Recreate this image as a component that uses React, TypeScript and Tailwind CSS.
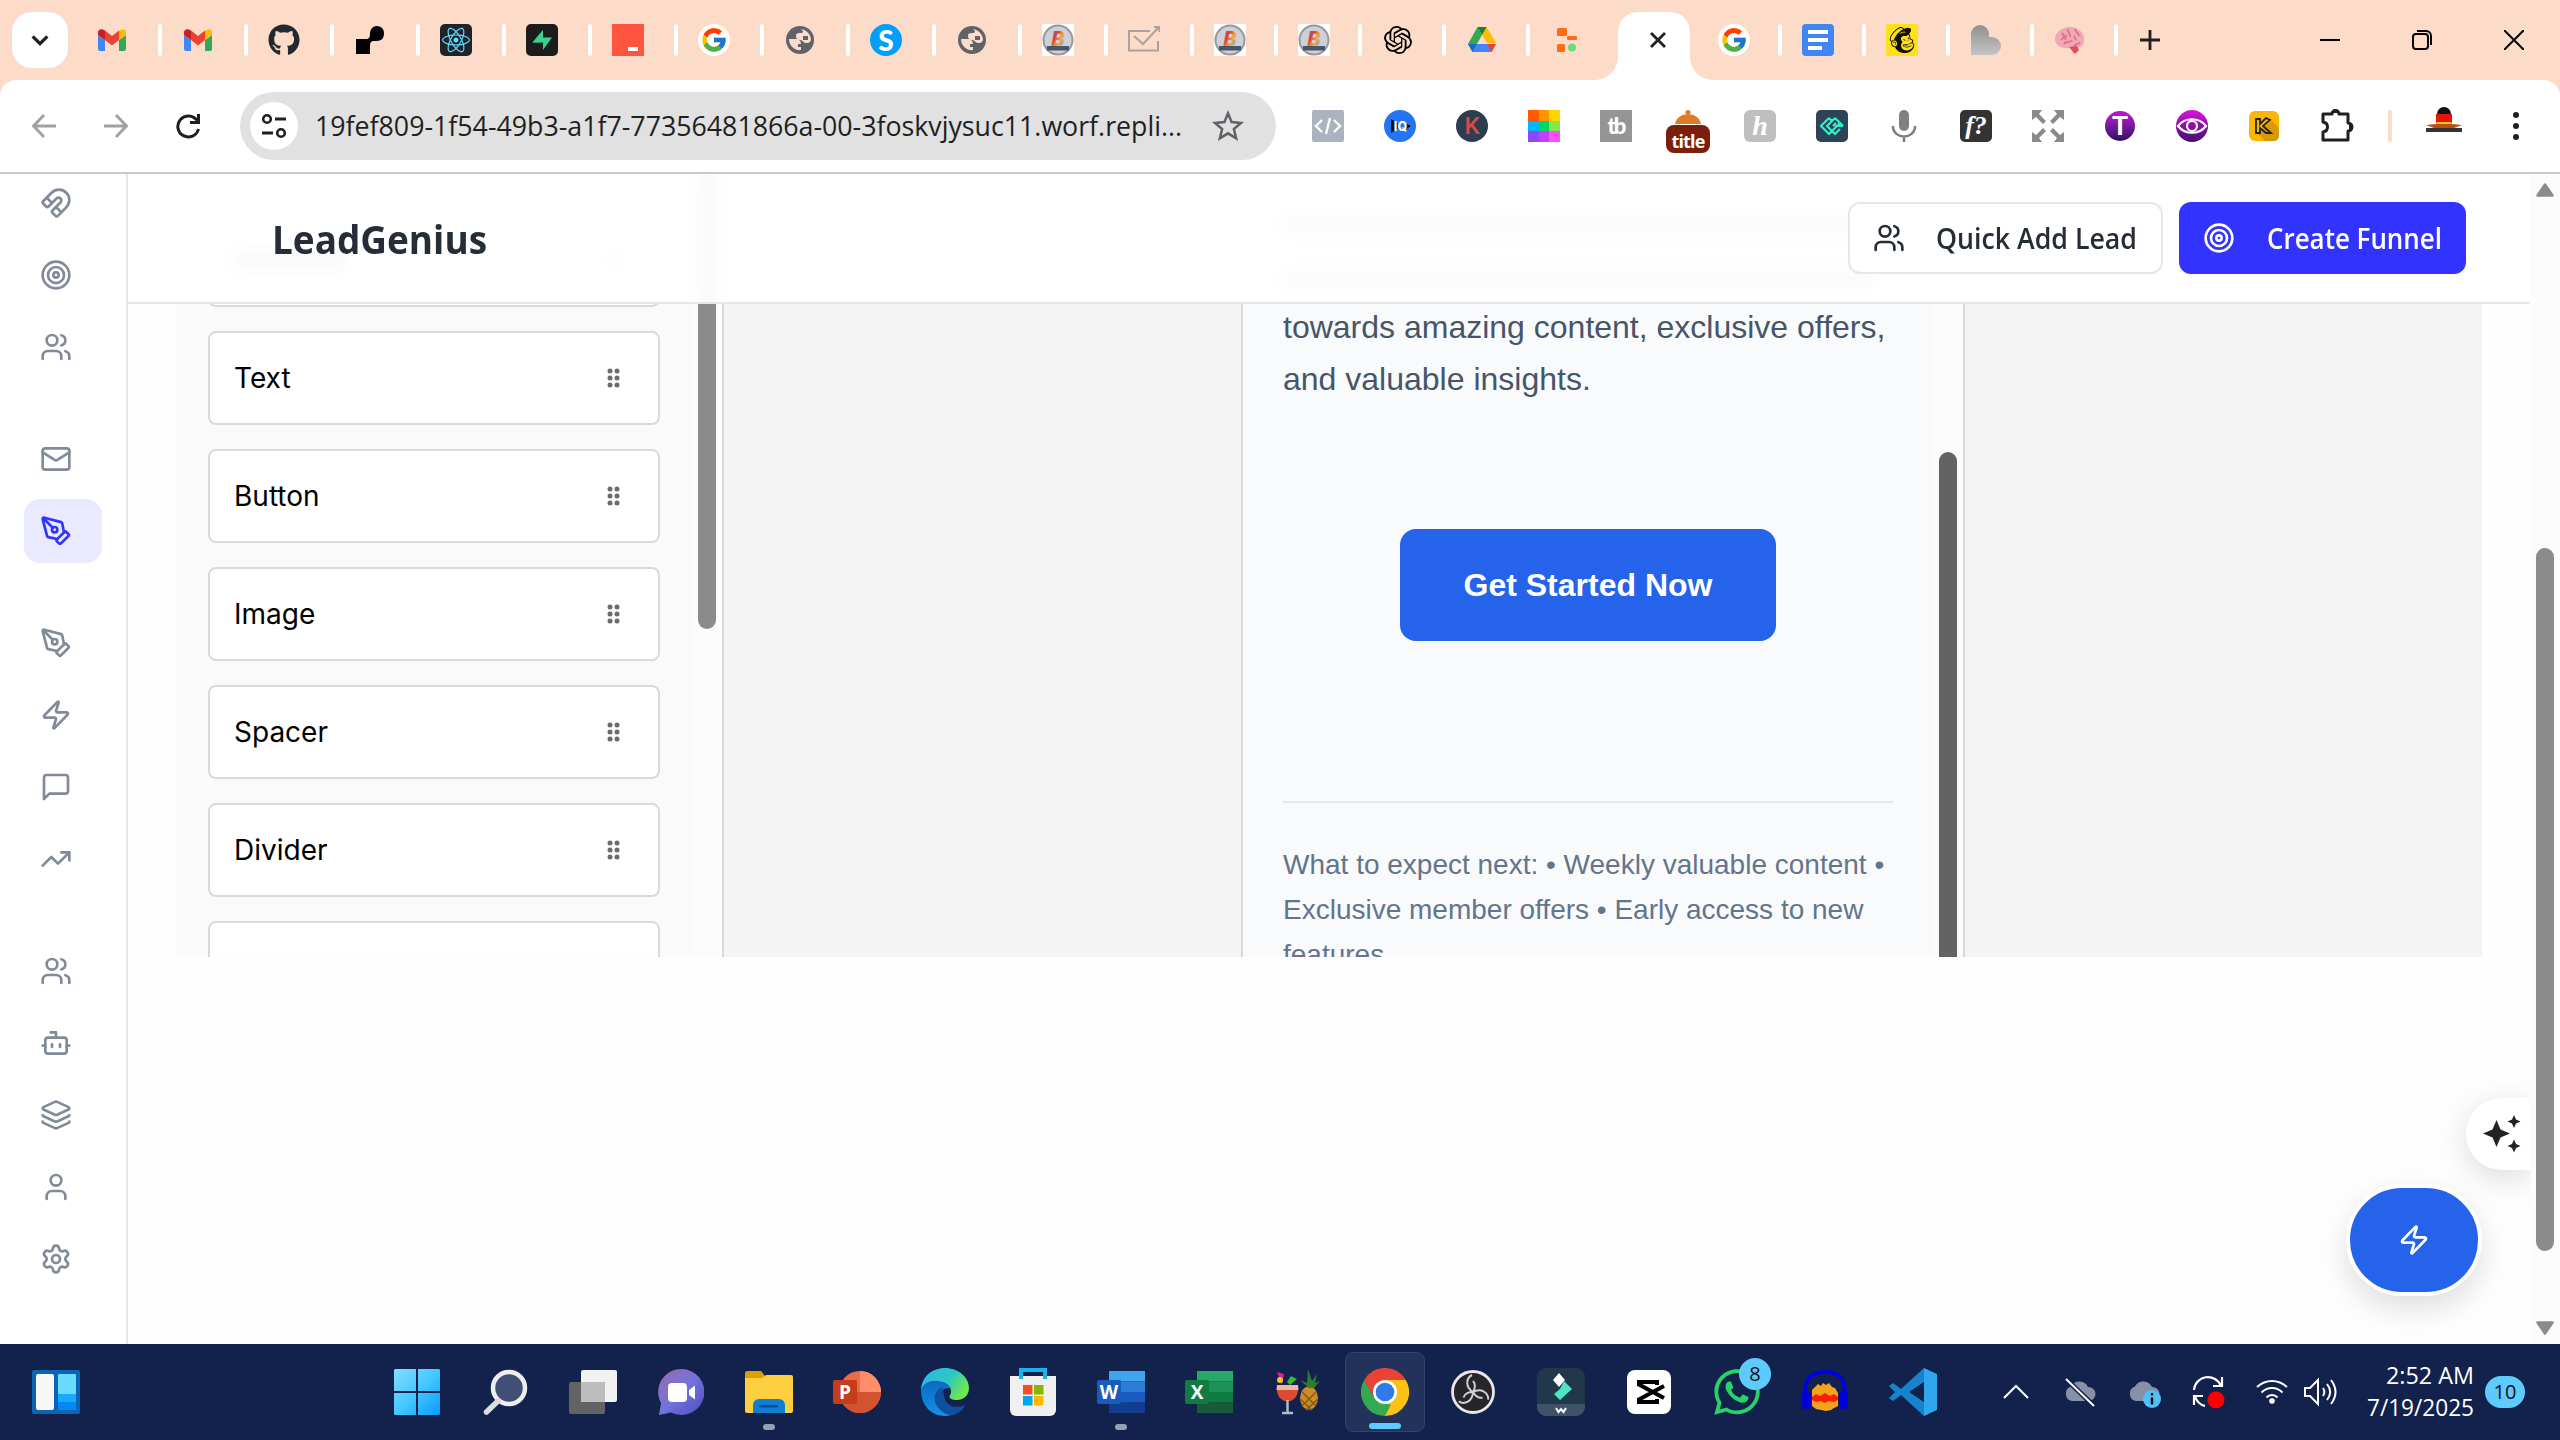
import React from "react";
import { Magnet, Target, Users, Mail, PenTool, Zap, TrendingUp, Bot, Layers, User, Settings } from "lucide-react";
import { FaGithub, FaReact, FaWhatsapp } from "react-icons/fa";
import { FcGoogle } from "react-icons/fc";
import { SiOpenai, SiMailchimp } from "react-icons/si";

type SvgProps = { children: React.ReactNode; size?: number; box?: number };
const Svg = ({ children, size = 32, box = 32 }: SvgProps) => (
  <svg width={size} height={size} viewBox={`0 0 ${box} ${box}`} fill="none" className="block shrink-0">
    {children}
  </svg>
);

/* ---------- tab favicons ---------- */
const Gmail = () => (
  <Svg>
    <path d="M2 11v14a2 2 0 0 0 2 2h5V16z" fill="#4285f4" />
    <path d="M23 27h5a2 2 0 0 0 2-2V11l-7 5z" fill="#34a853" />
    <path d="M23 6.500v9.500l7-5V8.500c0-3-3-4.200-5.200-2.600z" fill="#fbbc04" />
    <path d="M9 16V6.500l7 5.500 7-5.500V16l-7 5.500z" fill="#ea4335" />
    <path d="M2 8.500V11l7 5V6.500L7.200 5.700C5 4.500 2 5.600 2 8.500z" fill="#c5221f" />
  </Svg>
);
const Blob = () => (
  <Svg>
    <path d="M2 15h10c3 0 4-2 4-5 0-5 3-8 7-8s7 3 7 7c0 5-2 8-8 8h-2c-3 0-4 2-4 4v9H2z" fill="#000" />
  </Svg>
);
const ReactTab = () => (
  <div className="flex size-8 items-center justify-center rounded-[5px] bg-[#20232a]">
    <FaReact size={28} color="#61dafb" />
  </div>
);
const Supa = () => (
  <Svg>
    <rect width="32" height="32" rx="5" fill="#1c1c1c" />
    <path d="M17 6L6.500 18.500H15z" fill="#2fae75" />
    <path d="M17 26l9-12.500H17V6L6.500 18.500H17z" fill="#3ecf8e" />
  </Svg>
);
const RedTab = () => (
  <Svg>
    <rect width="32" height="32" fill="#ff5540" />
    <rect x="16" y="23" width="10" height="4" fill="#fff" />
  </Svg>
);
const GoogleTab = () => (
  <div className="flex size-8 items-center justify-center rounded-full bg-white">
    <FcGoogle size={28} />
  </div>
);
const Globe = () => (
  <Svg>
    <circle cx="16" cy="16" r="14" fill="#5f6368" />
    <path d="M5 15h7c3 0 5 2 5 5h-3v3h3v3c-6 1-12-4-12-11z" fill="#fcdbc9" />
    <path d="M17 5c6 1 10 6 10 11-1 3-3 3-5 3-3 0-3-3-6-3-3 0-4-2-4-4 0-3 2-3 5-3 2 0 3-2 0-4z" fill="#fcdbc9" />
    <path d="M19 12h5v4h-5z" fill="#5f6368" />
  </Svg>
);
const SkypeTab = () => (
  <div className="flex size-8 items-center justify-center rounded-full bg-[#009ffb] font-['Lato'] text-[28px] leading-none font-black text-white">S</div>
);
const BTab = () => (
  <Svg>
    <defs>
      <linearGradient id="btab" x1="0" y1="0" x2="1" y2="1">
        <stop stopColor="#2f80c9" />
        <stop offset=".35" stopColor="#e0402f" />
        <stop offset=".6" stopColor="#f7a93b" />
        <stop offset="1" stopColor="#3f8fd0" />
      </linearGradient>
    </defs>
    <rect width="32" height="32" fill="#fff" />
    <circle cx="16" cy="16" r="14.500" fill="#cdd0d8" stroke="#96989e" strokeWidth="2" />
    <text x="16" y="22" textAnchor="middle" fontFamily="'Roboto', sans-serif" fontStyle="italic" fontWeight="900" fontSize="21" fill="url(#btab)">B</text>
    <rect x="5" y="22" width="22" height="4.500" fill="#44566b" />
  </Svg>
);
const MailCheck = () => (
  <Svg>
    <path d="M22 7H1v19.500h29V17M6 12l9 8L31 3M26 3h5.500v5" stroke="#a8a39e" strokeWidth="2" />
  </Svg>
);
const Drive = () => (
  <Svg>
    <path d="M11.500 3h9L30 19h-9z" fill="#fbbc04" />
    <path d="M11.500 3l4.500 8L6.500 28 2 20z" fill="#34a853" />
    <path d="M11.500 3h9L16 11z" fill="#188038" />
    <path d="M11 20h19l-4.500 8h-19z" fill="#4285f4" />
    <path d="M2 20h9l-4.500 8z" fill="#1967d2" />
    <path d="M21 20h9l-4.500 8z" fill="#ea4335" />
  </Svg>
);
const Workflow = () => (
  <Svg>
    <rect x="7" y="4" width="10" height="8" rx="1.500" fill="#ff6a13" />
    <rect x="17" y="12" width="10" height="4" rx="1" fill="#ff6a13" />
    <rect x="7" y="20" width="8" height="8" rx="1.500" fill="#ff6a13" />
    <circle cx="22" cy="23.500" r="4" fill="#6bdc7c" />
  </Svg>
);
const Docs = () => (
  <Svg>
    <rect width="32" height="32" rx="4" fill="#4285f4" />
    <path d="M6 8h20M6 16h20M6 24h14" stroke="#fff" strokeWidth="4" />
  </Svg>
);
const Mailchimp = () => (
  <div className="flex size-8 items-center justify-center rounded-[2px] bg-[#ffe01b]">
    <SiMailchimp size={26} color="#111" />
  </div>
);
const GreyShape = () => (
  <Svg>
    <defs>
      <linearGradient id="gs" x1="0" y1="0" x2="0" y2="1">
        <stop offset="0" stopColor="#909090" />
        <stop offset="1" stopColor="#c4c4c4" />
      </linearGradient>
    </defs>
    <path d="M1 10a9 9 0 0 1 18 0v3h3a9 9 0 0 1 0 18H1z" fill="url(#gs)" />
  </Svg>
);
const Brain = () => (
  <Svg>
    <path d="M16 3c8 0 15 6 14 14-.5 5-3 6-6 6l-1 4-4 2-3-5c-8 1-15-2-15-9C1 8 8 3 16 3z" fill="#f3a6b3" />
    <path d="M8 9c3 3 2 5-1 7m7-11c-1 4 3 4 2 8m5-8c0 4 4 3 4 7M10 20c2-4 6 0 8-4m2 6c2-3 5-1 6-4M12 11l-1 5m9-4l2 4" stroke="#d9728a" strokeWidth="1.800" />
    <path d="M15 23l8-1 2 4-4 4z" fill="#dd4f63" />
  </Svg>
);

const wideTabs = [Gmail, Gmail, () => <FaGithub size={32} color="#24292f" />, Blob, ReactTab, Supa, RedTab, GoogleTab, Globe, SkypeTab, Globe, BTab, MailCheck];
const narrowTabs = [BTab, BTab, () => <SiOpenai size={28} color="#000" />, Drive];
const rightTabs = [GoogleTab, Docs, Mailchimp, GreyShape, Brain];

const Sep = () => <div className="h-8 w-1 rounded-sm bg-white" />;

const TabCell = ({ icon: Icon, wide, last }: { icon: React.FC; wide?: boolean; last?: boolean }) => (
  <div className={`flex shrink-0 items-center justify-between pl-5 ${wide ? "w-[86px]" : "w-[84px]"}`}>
    <div className="flex size-8 items-center justify-center">
      <Icon />
    </div>
    {!last && <Sep />}
  </div>
);

const TabStrip = () => (
  <div className="flex h-20 shrink-0 bg-[#fcdbc9]">
    <div className="flex w-[76px] shrink-0 items-center pl-3">
      <div className="flex size-14 items-center justify-center rounded-[20px] bg-white">
        <Svg size={22} box={24}>
          <path d="M4 8l8 8 8-8" stroke="#1f1f1f" strokeWidth="3.500" />
        </Svg>
      </div>
    </div>
    {wideTabs.map((t, i) => (
      <TabCell key={i} icon={t} wide />
    ))}
    {narrowTabs.map((t, i) => (
      <TabCell key={i} icon={t} />
    ))}
    <TabCell icon={Workflow} last />
    <div className="flex w-[84px] shrink-0 items-end justify-center pr-1">
      <svg width="24" height="24" viewBox="0 0 24 24" className="-ml-5 shrink-0">
        <path d="M24 0v24H0C14 24 24 14 24 0z" fill="#fff" />
      </svg>
      <div className="flex h-[68px] w-[72px] shrink-0 items-center justify-center rounded-t-[20px] bg-white pb-3 pl-2">
        <Svg size={18} box={18}>
          <path d="M2 2l14 14M16 2L2 16" stroke="#1f1f1f" strokeWidth="2.800" />
        </Svg>
      </div>
      <svg width="24" height="24" viewBox="0 0 24 24" className="-mr-5 shrink-0">
        <path d="M0 0v24h24C10 24 0 14 0 0z" fill="#fff" />
      </svg>
    </div>
    {rightTabs.map((t, i) => (
      <TabCell key={i} icon={t} />
    ))}
    <div className="flex w-16 items-center justify-center">
      <Svg size={22} box={22}>
        <path d="M11 1v20M1 11h20" stroke="#1f1f1f" strokeWidth="2.800" />
      </Svg>
    </div>
    <div className="ml-auto flex items-center">
      <div className="flex w-[92px] justify-center">
        <Svg size={20} box={20}><path d="M0 10h20" stroke="#000" strokeWidth="2" /></Svg>
      </div>
      <div className="flex w-[92px] justify-center">
        <Svg size={20} box={20}>
          <rect x="1" y="4" width="15" height="15" rx="3" stroke="#000" strokeWidth="2" />
          <path d="M5 1h9a5 5 0 0 1 5 5v9" stroke="#000" strokeWidth="2" />
        </Svg>
      </div>
      <div className="flex w-[92px] justify-center">
        <Svg size={20} box={20}><path d="M0 0l20 20M20 0L0 20" stroke="#000" strokeWidth="2" /></Svg>
      </div>
    </div>
  </div>
);

/* ---------- extension icons ---------- */
const extensions: React.FC[] = [
  () => (
    <Svg>
      <rect width="32" height="32" rx="2" fill="#adb3be" />
      <path d="M10 10l-6 6 6 6M22 10l6 6-6 6M18 8l-4 16" stroke="#fff" strokeWidth="2.400" />
    </Svg>
  ),
  () => (
    <Svg>
      <circle cx="16" cy="16" r="16" fill="#2474f5" />
      <path d="M7 9l8 5v4l-8 5z" fill="#111" />
      <path d="M21 13l6 3-6 4z" fill="#111" />
      <text x="16.500" y="20.500" textAnchor="middle" fontFamily="'Inter', sans-serif" fontWeight="800" fontSize="12.500" fill="#fff">IQ</text>
    </Svg>
  ),
  () => <div className="flex size-8 items-center justify-center rounded-full bg-[#2c3e4f] font-['Roboto'] text-[24px] leading-none font-medium text-[#d9484a]">K</div>,
  () => (
    <div className="grid size-8 grid-cols-3 overflow-hidden">
      <i className="bg-[#ff5a00]" /><i className="bg-[#ff9400]" /><i className="bg-[#ffd400]" />
      <i className="bg-[#00b7ff]" /><i className="bg-[#00d565]" /><i className="bg-[#84e84a]" />
      <i className="bg-[#8b49ff]" /><i className="bg-[#c340ff]" /><i className="bg-[#ff4dff]" />
    </div>
  ),
  () => <div className="flex size-8 items-center justify-center bg-[#959595] font-['Lato'] text-[22px] leading-none font-black tracking-[-2px] text-white">tb</div>,
  () => (
    <div className="mt-2.5 flex flex-col items-center">
      <svg width="26" height="14" viewBox="0 0 26 14">
        <circle cx="13" cy="2.500" r="2.500" fill="#e07b26" />
        <path d="M0 14C2 1 24 1 26 14z" fill="#e07b26" />
      </svg>
      <div className="mt-px flex h-7 w-11 items-center justify-center rounded-lg bg-[#7c1e0c] pt-1 font-['Open_Sans'] text-[18px] leading-none font-bold tracking-[-0.8px] text-white">title</div>
    </div>
  ),
  () => <div className="flex size-8 items-center justify-center rounded-md bg-[#bfbfbf] font-['Liberation_Serif'] text-[28px] leading-none font-bold text-white italic">h</div>,
  () => (
    <Svg>
      <rect width="32" height="32" rx="5" fill="#2d435a" />
      <path d="M13 8l-8 8 8 8 3-3M13 8l3 3M19 8l-8 8 5 5 8-8M19 8l8 8M17 16l3-3M27 16h-8M24 19l-5 5-3-3" stroke="#31f0c4" strokeWidth="2.200" />
    </Svg>
  ),
  () => (
    <Svg>
      <rect x="11" y="0" width="10" height="21" rx="5" fill="#808080" />
      <path d="M5 16c0 14 22 14 22 0M16 26v6" stroke="#808080" strokeWidth="2.600" />
    </Svg>
  ),
  () => <div className="flex size-8 items-center justify-center rounded-[5px] bg-[#333] font-['Liberation_Serif'] text-[26px] leading-none font-bold text-white italic">f?</div>,
  () => (
    <Svg>
      <path d="M0 0h10L7 4l7 7-3 3-7-7-4 3zM32 0v10l-4-3-7 7-3-3 7-7-3-4zM0 32V22l4 3 7-7 3 3-7 7 3 4zM32 32H22l3-4-7-7 3-3 7 7 4-3z" fill="#8a8a8a" />
    </Svg>
  ),
  () => <div className="flex size-[30px] items-center justify-center rounded-full bg-linear-to-b from-[#c511d4] to-[#2d0f66] font-['Roboto'] text-[26px] leading-none font-bold text-white">T</div>,
  () => (
    <Svg>
      <defs>
        <linearGradient id="eye" x1="0" y1="0" x2="0" y2="1"><stop stopColor="#dd11dd" /><stop offset="1" stopColor="#3a1070" /></linearGradient>
      </defs>
      <circle cx="16" cy="16" r="16" fill="url(#eye)" />
      <path d="M2 16c7-9 21-9 28 0-7 9-21 9-28 0z" stroke="#fff" strokeWidth="2.200" />
      <circle cx="16" cy="16" r="5" stroke="#fff" strokeWidth="2.200" />
    </Svg>
  ),
  () => (
    <Svg>
      <rect x="1" y="1" width="30" height="30" rx="6" fill="#fbb604" />
      <path d="M9 23l15-12 7 7v8a5 5 0 0 1-5 5H17z" fill="#d79a06" />
      <path d="M8 9v14h4v-5l6 5h5l-8-7 7-6-4-2-6 6V9z" stroke="#222" strokeWidth="1.800" />
    </Svg>
  ),
  () => (
    <Svg size={36} box={36}>
      <path d="M5 6h9a3.500 3.500 0 0 1 7 0h9v9a4 4 0 0 1 0 8v9H5v-8c6-1 6-9 0-10z" stroke="#1f1f1f" strokeWidth="3" strokeLinejoin="round" />
      <path d="M14 5a3.500 3.500 0 0 1 7 0zM31 15a4 4 0 0 1 0 8z" fill="#1f1f1f" />
    </Svg>
  ),
];

const Toolbar = () => (
  <div className="shrink-0 bg-[#fcdbc9]">
    <div className="flex h-[94px] items-center rounded-t-2xl border-b-2 border-[#c9c9c9] bg-white">
      <div className="ml-2 flex items-center">
        <div className="flex w-[72px] justify-center">
          <Svg size={24} box={24}><path d="M24 12H2M12 1L1.500 12 12 23" stroke="#a0a0a0" strokeWidth="2.800" /></Svg>
        </div>
        <div className="flex w-[72px] justify-center">
          <Svg size={24} box={24}><path d="M0 12h22M12 1l10.500 11L12 23" stroke="#a0a0a0" strokeWidth="2.800" /></Svg>
        </div>
        <div className="flex w-[72px] justify-center">
          <Svg size={26} box={26}><path d="M22 7.500A10.500 10.500 0 1 0 23.500 16M23.500 1v8.500H15" stroke="#1f1f1f" strokeWidth="3" /></Svg>
        </div>
      </div>
      <div className="ml-4 flex h-[68px] w-[1036px] shrink-0 items-center rounded-full bg-[#e1e1e1] pr-8 pl-2.5">
        <div className="flex size-12 shrink-0 items-center justify-center rounded-full bg-white">
          <Svg size={26} box={26}>
            <circle cx="6" cy="6" r="3.800" stroke="#1f1f1f" strokeWidth="2.600" />
            <circle cx="20" cy="20" r="3.800" stroke="#1f1f1f" strokeWidth="2.600" />
            <path d="M14 6h11M1 20h11" stroke="#1f1f1f" strokeWidth="2.800" />
          </Svg>
        </div>
        <svg width="890" height="44" viewBox="0 0 890 44" className="ml-4 overflow-visible">
          <text x="1" y="32" textLength="867" lengthAdjust="spacingAndGlyphs" fontFamily="'Open Sans', sans-serif" fontSize="28" fill="#1f1f1f">
            19fef809-1f54-49b3-a1f7-77356481866a-00-3foskvjysuc11.worf.repli...
          </text>
        </svg>
        <div className="ml-2">
          <Svg size={32} box={24}>
            <path d="M12 2.500l2.700 6.600 7.100.6-5.400 4.600 1.700 7L12 17.500l-6.100 3.800 1.700-7-5.400-4.600 7.100-.6z" stroke="#5f6368" strokeWidth="1.900" />
          </Svg>
        </div>
      </div>
      <div className="ml-4 flex items-center">
        {extensions.map((E, i) => (
          <div key={i} className="flex w-[72px] justify-center"><E /></div>
        ))}
      </div>
      <div className="ml-4 h-8 w-1 rounded-sm bg-[#fcdbc9]" />
      <div className="ml-[34px] flex w-9 flex-col items-center">
        <svg width="38" height="26" viewBox="0 0 38 26" className="-mt-3">
          <path d="M12 7a7 7 0 0 1 14 0z" fill="#111" />
          <path d="M11 7h16v9H11z" fill="#e8120c" />
          <path d="M12 15h14l3 4H9z" fill="#ffc800" />
          <path d="M1 18l10-1h16l10 1-8 3H9z" fill="#b5501a" />
          <rect x="1" y="21" width="36" height="4" fill="#333" />
        </svg>
      </div>
      <div className="ml-[51px] flex flex-col gap-[5px]">
        <i className="size-1.5 rounded-full bg-[#1f1f1f]" />
        <i className="size-1.5 rounded-full bg-[#1f1f1f]" />
        <i className="size-1.5 rounded-full bg-[#1f1f1f]" />
      </div>
    </div>
  </div>
);

/* ---------- application ---------- */
const MessageBox = ({ size = 32 }: { size?: number }) => (
  <svg width={size} height={size} viewBox="0 0 24 24" fill="none" stroke="currentColor" strokeWidth="2" strokeLinecap="round" strokeLinejoin="round">
    <path d="M21 15a2 2 0 0 1-2 2H7l-4 4V5a2 2 0 0 1 2-2h14a2 2 0 0 1 2 2z" />
  </svg>
);

const navGroups = [
  [Magnet, Target, Users],
  [Mail, PenTool],
  [PenTool, Zap, MessageBox, TrendingUp],
  [Users, Bot, Layers, User, Settings],
];

const Sidebar = () => (
  <nav className="w-32 shrink-0 border-r-2 border-[#e2e8f0] bg-white pl-6">
    <div className="-mt-[3px] flex flex-col gap-12">
      {navGroups.map((group, g) => (
        <div key={g} className="flex flex-col gap-2">
          {group.map((Icon, i) => {
            const active = g === 1 && i === 1;
            return (
              <div key={i} className={`flex h-16 w-[78px] items-center rounded-2xl pl-4 ${active ? "bg-[#e9e9ff] text-[#3333ff]" : "text-[#828a99]"}`}>
                <Icon size={32} />
              </div>
            );
          })}
        </div>
      ))}
    </div>
  </nav>
);

const Grip = () => (
  <svg width="13" height="20" viewBox="0 0 13 20" fill="#6b6b6b">
    {[3, 10, 17].map((y) => (
      <g key={y}>
        <circle cx="3" cy={y} r="2.500" />
        <circle cx="10" cy={y} r="2.500" />
      </g>
    ))}
  </svg>
);

const BlockPalette = () => (
  <div className="flex w-[548px] shrink-0 border-r-2 border-[#d9d9d9] bg-[#fafafa]">
    <div className="flex w-[516px] shrink-0 flex-col gap-6 pt-[39px] pl-8">
      {["", "Text", "Button", "Image", "Spacer", "Divider", ""].map((label, i) => (
        <div key={i} className="flex h-[94px] w-[452px] shrink-0 items-center justify-between rounded-lg border-2 border-[#d9d9d9] bg-white pr-[38px] pl-6 font-['Inter'] text-[28px] text-black">
          {label ? <span>{label}</span> : <i className="h-4 w-[112px] bg-black/60" />}
          <Grip />
        </div>
      ))}
    </div>
    <div className="flex h-full w-[30px] justify-center bg-[#fcfcfc]">
      <div className="h-[455px] w-[18px] rounded-full bg-[#8b8b8b]" />
    </div>
  </div>
);

const Preview = () => (
  <div className="flex w-[724px] shrink-0 border-x-2 border-[#d9d9d9] bg-[#f8fafc] font-['Liberation_Sans']">
    <div className="w-[690px] px-10">
      <div className="h-[128px] pt-11">
        <div className="h-4 w-[600px] bg-[#475569]/60" />
        <div className="mt-9 h-4 w-[590px] bg-[#475569]/60" />
      </div>
      <p className="text-[32px] leading-[51.5px] whitespace-nowrap text-[#475569]">
        towards amazing content, exclusive offers,
        <br />
        and valuable insights.
      </p>
      <div className="mx-auto mt-[124px] flex h-28 w-[376px] items-center justify-center rounded-2xl bg-[#2563eb] text-[32px] font-bold text-white">
        Get Started Now
      </div>
      <div className="mt-40 h-0.5 bg-[#e2e8f0]" />
      <p className="mt-10 text-[28px] leading-[44.800px] whitespace-nowrap text-[#64748b]">
        What to expect next: • Weekly valuable content •
        <br />
        Exclusive member offers • Early access to new
        <br />
        features
      </p>
    </div>
    <div className="flex w-[30px] justify-center bg-[#fcfcfc]">
      <div className="mt-[278px] w-[18px] rounded-t-full bg-[#636363]" />
    </div>
  </div>
);

const AppHeader = () => (
  <header className="absolute inset-x-0 top-0 flex h-[130px] items-center border-b-2 border-[#e2e8f0] bg-white/95 pr-16 pl-[144px] backdrop-blur-[8px]">
    <svg width="220" height="60" viewBox="0 0 220 60" className="mr-auto overflow-visible">
      <text x="0" y="46" textLength="215" lengthAdjust="spacingAndGlyphs" fontFamily="'Open Sans', sans-serif" fontWeight="700" fontSize="39.500" fill="#272d38">
        LeadGenius
      </text>
    </svg>
    <div className="flex h-[72px] w-[315px] shrink-0 items-center rounded-xl border-2 border-[#e2e8f0] bg-white pl-[23px] text-[#272d38]">
      <Users size={32} className="shrink-0" />
      <svg width="202" height="40" viewBox="0 0 202 40" className="ml-[31px] shrink-0 overflow-visible">
        <text x="0" y="30.500" textLength="201" lengthAdjust="spacingAndGlyphs" fontFamily="'Open Sans', sans-serif" fontWeight="600" fontSize="28" fill="#272d38">
          Quick Add Lead
        </text>
      </svg>
    </div>
    <div className="ml-4 flex h-[72px] w-[287px] shrink-0 items-center rounded-xl bg-[#3333ff] pl-6 text-white">
      <Target size={32} className="shrink-0" />
      <svg width="178" height="40" viewBox="0 0 178 40" className="ml-8 shrink-0 overflow-visible">
        <text x="0" y="30.500" textLength="175" lengthAdjust="spacingAndGlyphs" fontFamily="'Open Sans', sans-serif" fontWeight="600" fontSize="28" fill="#fff">
          Create Funnel
        </text>
      </svg>
    </div>
  </header>
);

const Workspace = () => (
  <main className="relative w-[2402px] shrink-0 overflow-hidden bg-[#fefefe]">
    <div className="mx-12 flex h-[783px] w-[2306px] overflow-hidden bg-[#f4f4f4]">
      <BlockPalette />
      <div className="flex flex-1 pl-[517px]">
        <Preview />
      </div>
    </div>
    <AppHeader />
    <div className="absolute top-[924px] right-0 flex h-[72px] w-16 items-center rounded-l-full bg-white pl-4 shadow-[0_8px_32px_rgba(0,0,0,0.14)]">
      <svg width="40" height="40" viewBox="0 0 40 40" fill="#222">
        <path d="M14.500 6l4 9.500 9.500 4-9.500 4-4 9.500-4-9.500-9.500-4 9.500-4zM32 1l2 4.500 4.500 2L34 9.500 32 14l-2-4.500-4.500-2 4.500-2zM32 25.500l2 4.500 4.500 2-4.500 2-2 4.500-2-4.500-4.500-2 4.500-2z" />
      </svg>
    </div>
    <div className="absolute top-[1010px] right-12 flex h-28 w-[136px] items-center justify-center rounded-[56px] border-4 border-white bg-[#2563eb] text-white shadow-[0_12px_30px_rgba(0,0,0,0.13)]">
      <Zap size={32} />
    </div>
  </main>
);

const PageScrollbar = () => (
  <div className="flex w-[30px] shrink-0 flex-col items-center bg-[#fcfcfc] pt-[9px] pb-[9px]">
    <svg width="18" height="14" viewBox="0 0 18 14"><path d="M9 1.500L16.500 12.500h-15z" fill="#8b8b8b" stroke="#8b8b8b" strokeWidth="2.500" strokeLinejoin="round" /></svg>
    <div className="mt-[351px] h-[703px] w-[18px] rounded-full bg-[#8b8b8b]" />
    <svg width="18" height="14" viewBox="0 0 18 14" className="mt-auto"><path d="M9 12.500L1.500 1.500h15z" fill="#8b8b8b" stroke="#8b8b8b" strokeWidth="2.500" strokeLinejoin="round" /></svg>
  </div>
);

/* ---------- taskbar ---------- */
const OfficeTile = ({ letter, tones, badge, round }: { letter: string; tones: string[]; badge: string; round?: boolean }) => (
  <svg width="48" height="48" viewBox="0 0 48 48">
    {round ? (
      <>
        <circle cx="27" cy="24" r="21" fill={tones[0]} />
        <path d="M27 3a21 21 0 0 1 21 21H27z" fill={tones[1]} />
        <path d="M6 24h42a21 21 0 0 1-42 0z" fill={tones[2]} />
      </>
    ) : (
      tones.map((c, i) => <rect key={c} x="12" y={3 + i * 10.500} width="36" height="10.500" fill={c} />)
    )}
    <rect x="0" y="12" width="24" height="24" rx="2" fill={badge} />
    <text x="12" y="31" textAnchor="middle" fontFamily="'Open Sans', sans-serif" fontWeight="700" fontSize="19" fill="#fff">{letter}</text>
  </svg>
);

const Start = () => (
  <Svg size={46} box={46}>
    <defs>
      <linearGradient id="win" gradientUnits="userSpaceOnUse" x1="0" y1="0" x2="46" y2="46"><stop stopColor="#86dcff" /><stop offset=".5" stopColor="#45c8ff" /><stop offset="1" stopColor="#0a98ff" /></linearGradient>
    </defs>
    <path d="M1 0h21v22H0V1zM24 0h21l1 1v21H24zM0 24h22v22H1l-1-1zM24 24h22v21l-1 1H24z" fill="url(#win)" />
  </Svg>
);
const Search = () => (
  <Svg size={46} box={46}>
    <circle cx="27" cy="19" r="16" fill="#414e75" stroke="#eee" strokeWidth="4.500" />
    <path d="M16 32L4.500 43" stroke="#ddd" strokeWidth="5.500" strokeLinecap="round" />
  </Svg>
);
const TaskView = () => (
  <Svg size={48} box={48}>
    <rect x="0" y="14" width="36" height="32" rx="2" fill="#636363" />
    <rect x="12" y="2" width="36" height="32" rx="2" fill="#f2f2f2" />
    <rect x="12" y="14" width="24" height="20" fill="#bdbdbd" />
  </Svg>
);
const Chat = () => (
  <Svg size={46} box={46}>
    <defs><linearGradient id="chat" x1="0" y1="0" x2="1" y2="1"><stop stopColor="#9c6ba8" /><stop offset=".5" stopColor="#7273dc" /><stop offset="1" stopColor="#5049c0" /></linearGradient></defs>
    <path d="M23 0a23 23 0 1 1-10 43.500L1 46l2-12A23 23 0 0 1 23 0z" fill="url(#chat)" />
    <rect x="10" y="14" width="19" height="19" rx="4" fill="#fff" />
    <path d="M31 21l6-4.500v14L31 26z" fill="#fff" />
  </Svg>
);
const Explorer = () => (
  <Svg size={48} box={48}>
    <path d="M0 5a2 2 0 0 1 2-2h14l4 5v6H0z" fill="#dd9f00" />
    <path d="M0 10h17l4-3h25a2 2 0 0 1 2 2v34a2 2 0 0 1-2 2H2a2 2 0 0 1-2-2z" fill="#ffcf42" />
    <path d="M8 45V37a6 6 0 0 1 6-6h20a6 6 0 0 1 6 6v8z" fill="#0f7fd6" />
    <rect x="14" y="37" width="19" height="2.500" fill="#0a4f94" />
  </Svg>
);
const Edge = () => (
  <Svg size={48} box={48}>
    <defs>
      <linearGradient id="e1" x1="0" y1="0" x2="1" y2=".5"><stop stopColor="#2fb4f0" /><stop offset=".6" stopColor="#2cc8c2" /><stop offset="1" stopColor="#6be84b" /></linearGradient>
      <linearGradient id="e2" x1="0" y1="0" x2="0" y2="1"><stop stopColor="#0a6bc0" /><stop offset="1" stopColor="#1590e6" /></linearGradient>
    </defs>
    <path d="M0 23C0 9 11 0 24 0s24 9 24 20c0 8-6 12-12 12-5 0-9-2-7-5 3-4 0-11-8-13C10 12 2 16 0 23z" fill="url(#e1)" />
    <path d="M0 22c2-7 10-10 17-9 7 1 11 4 12 7-7-1-12 5-10 13 2 9 10 14 17 12-4 2-8 3-12 3C10 48 0 37 0 22z" fill="url(#e2)" />
    <path d="M21 19c-7 4-10 11-5 19 6 9 16 11 20 7 4-1 7-5 8-8-8 4-20 2-21-10z" fill="#10509f" />
  </Svg>
);
const Store = () => (
  <Svg size={48} box={48}>
    <path d="M1 8h46v34a6 6 0 0 1-6 6H7a6 6 0 0 1-6-6z" fill="#f0f0f0" />
    <path d="M12 11V2h24v9" stroke="#1ab2ee" strokeWidth="4" />
    <rect x="14" y="17" width="9.500" height="9.500" fill="#f25022" />
    <rect x="25" y="17" width="9.500" height="9.500" fill="#7fba00" />
    <rect x="14" y="28" width="9.500" height="9.500" fill="#00a4ef" />
    <rect x="25" y="28" width="9.500" height="9.500" fill="#ffb900" />
  </Svg>
);
const Cocktail = () => (
  <Svg size={48} box={48}>
    <ellipse cx="36" cy="30" rx="9" ry="11.500" fill="#c98c28" />
    <path d="M29 24l14 14M27 31l12 11M43 24L29 38M45 31L33 42" stroke="#8a5813" strokeWidth="1.500" />
    <path d="M36 20l-9-8 7 3 1-14 4 12 5-7-2 9 5-2-6 7z" fill="#2f7d28" />
    <path d="M4 18h21c1 8-3 14-8 15h-5C7 32 3 26 4 18z" fill="#e04b2f" />
    <path d="M4 17h21l.5 5H3.500z" fill="#e9b9a5" />
    <path d="M14.500 32v12M9 45h11" stroke="#aebccb" strokeWidth="2.500" />
    <path d="M9 17L4 4l7 2z" fill="#e0208f" /><path d="M14 14l4-6 6 3-7 6z" fill="#37b837" /><circle cx="7" cy="12" r="3" fill="#f0c22e" />
  </Svg>
);
const Chrome = () => (
  <Svg size={48} box={48}>
    <path d="M24 24V12h20.800A24 24 0 0 1 24 48z" fill="#fbc116" />
    <path d="M24 48l10.400-18L24 24l-10 6z" fill="#fbc116" />
    <path d="M3.200 12L13.600 30 24 36l6 .5L24 48A24 24 0 0 1 3.200 12z" fill="#34a853" />
    <path d="M3.200 12A24 24 0 0 1 44.800 12H24L13.600 30z" fill="#ea4335" />
    <circle cx="24" cy="24" r="12" fill="#fff" />
    <circle cx="24" cy="24" r="9.300" fill="#2f7bea" />
  </Svg>
);
const Obs = () => (
  <Svg size={46} box={46}>
    <circle cx="23" cy="23" r="20.500" fill="#26252a" stroke="#e8e8e8" strokeWidth="2.800" />
    {[0, 120, 240].map((a) => (
      <path key={a} transform={`rotate(${a} 23 23)`} d="M22 6c-6 3-7 12 1 17 2-3 3-8 0-11" stroke="#cfcfcf" strokeWidth="2" />
    ))}
  </Svg>
);
const Filmora = () => (
  <Svg size={48} box={48}>
    <rect x="0" y="0" width="48" height="48" rx="9" fill="#21384a" />
    <path d="M0 36h48v3a9 9 0 0 1-9 9H9a9 9 0 0 1-9-9z" fill="#3f5268" />
    <path d="M22 5l6 7-6 7-6-7z" fill="#fff" />
    <path d="M27 13l8 8-12 11-6-6 6-5z" fill="#50e3c2" />
    <path d="M19 40l2.500 4 2.500-3 2.500 3 2.500-4" stroke="#fff" strokeWidth="2" />
  </Svg>
);
const CapCut = () => (
  <Svg size={44} box={44}>
    <rect width="44" height="44" rx="8" fill="#fff" />
    <path d="M37 16L12 29.500V32h18v-3M37 28L12 14.500V12h18v3" stroke="#000" strokeWidth="4" />
  </Svg>
);
const WhatsApp = () => (
  <div className="relative">
    <FaWhatsapp size={52} color="#25d366" />
    <div className="absolute -top-2 left-[28px] flex size-8 items-center justify-center rounded-full bg-[#5ecbff] font-['Open_Sans'] text-[20px] leading-none text-[#111]">8</div>
  </div>
);
const Audacity = () => (
  <Svg size={48} box={48}>
    <path d="M6 32C0 10 12 4 24 4s24 6 18 28" stroke="#0000e6" strokeWidth="4" />
    <rect x="1" y="23" width="9" height="18" rx="4" fill="#0000d8" />
    <rect x="38" y="23" width="9" height="18" rx="4" fill="#0000d8" />
    <path d="M11 38V22l3-3 3-3 3 2 2-3 3 2 3-2 3 4 3 1 3 5v13l-4 2-3 2-5 1-5-1-5-1z" fill="#f5a31a" />
    <path d="M11 32v-3l4-3 4 2 5-3 5 3 4-2 4 3v3l-4 2-5-1-4 2-5-2-4 1z" fill="#ff1d00" />
  </Svg>
);
const VsCode = () => (
  <Svg size={48} box={48}>
    <path d="M35 0L12 21 4 15l-4 3 6 6-6 6 4 3 8-6 23 21V34L20 24l15-10z" fill="#1683cf" />
    <path d="M35 0l13 6v36l-13 6z" fill="#2fa6ee" />
  </Svg>
);

const apps: { icon: React.FC; mark?: boolean; active?: boolean }[] = [
  { icon: Start },
  { icon: Search },
  { icon: TaskView },
  { icon: Chat },
  { icon: Explorer, mark: true },
  { icon: () => <OfficeTile letter="P" tones={["#ed6c47", "#ff8f6b", "#d35230"]} badge="#c43e1c" round /> },
  { icon: Edge },
  { icon: Store },
  { icon: () => <OfficeTile letter="W" tones={["#41a5ee", "#2b7cd3", "#185abd", "#103f91"]} badge="#185abd" />, mark: true },
  { icon: () => <OfficeTile letter="X" tones={["#27a768", "#1f9157", "#107c41", "#185c37"]} badge="#107c41" /> },
  { icon: Cocktail },
  { icon: Chrome, active: true },
  { icon: Obs },
  { icon: Filmora },
  { icon: CapCut },
  { icon: WhatsApp },
  { icon: Audacity },
  { icon: VsCode },
];

const Cloud = ({ children }: { children: React.ReactNode }) => (
  <Svg size={34} box={34}>
    <path d="M9 26a7.500 7.500 0 0 1-1-14.500A9.500 9.500 0 0 1 25 12a7 7 0 0 1 1 14z" fill="#8790a8" />
    {children}
  </Svg>
);

const Taskbar = () => (
  <footer className="flex h-24 shrink-0 items-center bg-[#12224c] text-white">
    <div className="w-[373px] shrink-0 pl-8">
      <svg width="48" height="44" viewBox="0 0 48 44">
        <rect width="48" height="44" rx="2" fill="#0a66b5" />
        <rect x="4" y="4" width="18" height="36" rx="2" fill="#f7f7f7" />
        <rect x="26" y="4" width="18" height="20" rx="1" fill="#69dbff" />
        <rect x="26" y="24" width="18" height="8" fill="#1ba8ff" />
        <rect x="26" y="32" width="18" height="8" fill="#0588f0" />
      </svg>
    </div>
    {apps.map(({ icon: Icon, mark, active }, i) => (
      <div key={i} className="flex w-[88px] shrink-0 justify-center">
        <div className={`relative flex size-20 items-center justify-center rounded-lg ${active ? "border border-[#33426b] bg-[#22325b]" : ""}`}>
          <Icon />
          {mark && <i className="absolute bottom-0.5 h-1.5 w-3 rounded-full bg-[#979fb4]" />}
          {active && <i className="absolute bottom-0.5 h-1.5 w-8 rounded-full bg-[#5ecbff]" />}
        </div>
      </div>
    ))}
    <div className="ml-auto flex items-center pr-9">
      <Svg size={26} box={26}><path d="M1 19L13 7l12 12" stroke="#fff" strokeWidth="2" /></Svg>
      <div className="ml-[34px]"><Cloud><path d="M3 4l28 27" stroke="#12224c" strokeWidth="5" /><path d="M3 4l28 27" stroke="#fff" strokeWidth="2" /></Cloud></div>
      <div className="ml-[30px]">
        <Cloud>
          <circle cx="25" cy="24" r="9" fill="#52c0f5" />
          <path d="M25 22.500v7M25 18v2.500" stroke="#111" strokeWidth="2.400" />
        </Cloud>
      </div>
      <div className="ml-[30px]">
        <Svg size={34} box={34}>
          <path d="M3 15A14 14 0 0 1 30 11M31 2v9h-9M14 31A14 14 0 0 1 4 21M3 30v-9h9" stroke="#fff" strokeWidth="2.200" />
          <circle cx="25" cy="25" r="8.500" fill="#f00" />
        </Svg>
      </div>
      <div className="ml-[30px]">
        <Svg size={34} box={34}>
          <path d="M2 12c9-8 21-8 30 0M6.500 17.500c6-6 15-6 21 0M11.500 22.500c3-3.500 8-3.500 11 0" stroke="#fff" strokeWidth="2" />
          <circle cx="17" cy="26" r="2.800" fill="#fff" />
        </Svg>
      </div>
      <div className="ml-3.5">
        <Svg size={34} box={34}>
          <path d="M2 13h5l8-8v24l-8-8H2zM20 13c2 3 2 5 0 8M24 9c4 5 4 11 0 16M28 5c6 8 6 16 0 24" stroke="#fff" strokeWidth="2" />
        </Svg>
      </div>
      <svg width="112" height="70" viewBox="0 0 112 70" className="ml-[25px] overflow-visible" fontFamily="'Open Sans', sans-serif" fontSize="23" fill="#fff">
        <text x="112" y="27" textAnchor="end" textLength="88" lengthAdjust="spacingAndGlyphs">2:52 AM</text>
        <text x="112" y="59" textAnchor="end" textLength="107" lengthAdjust="spacingAndGlyphs">7/19/2025</text>
      </svg>
      <div className="-mr-px ml-[11px] flex h-8 w-10 items-center justify-center rounded-full bg-[#5ecbff] font-['Open_Sans'] text-[20px] leading-none text-[#111]">10</div>
    </div>
  </footer>
);

export default function App() {
  return (
    <div className="flex h-[1440px] w-[2560px] flex-col overflow-hidden bg-white">
      <TabStrip />
      <Toolbar />
      <div className="flex h-[1170px] shrink-0 overflow-hidden">
        <Sidebar />
        <Workspace />
        <PageScrollbar />
      </div>
      <Taskbar />
    </div>
  );
}
